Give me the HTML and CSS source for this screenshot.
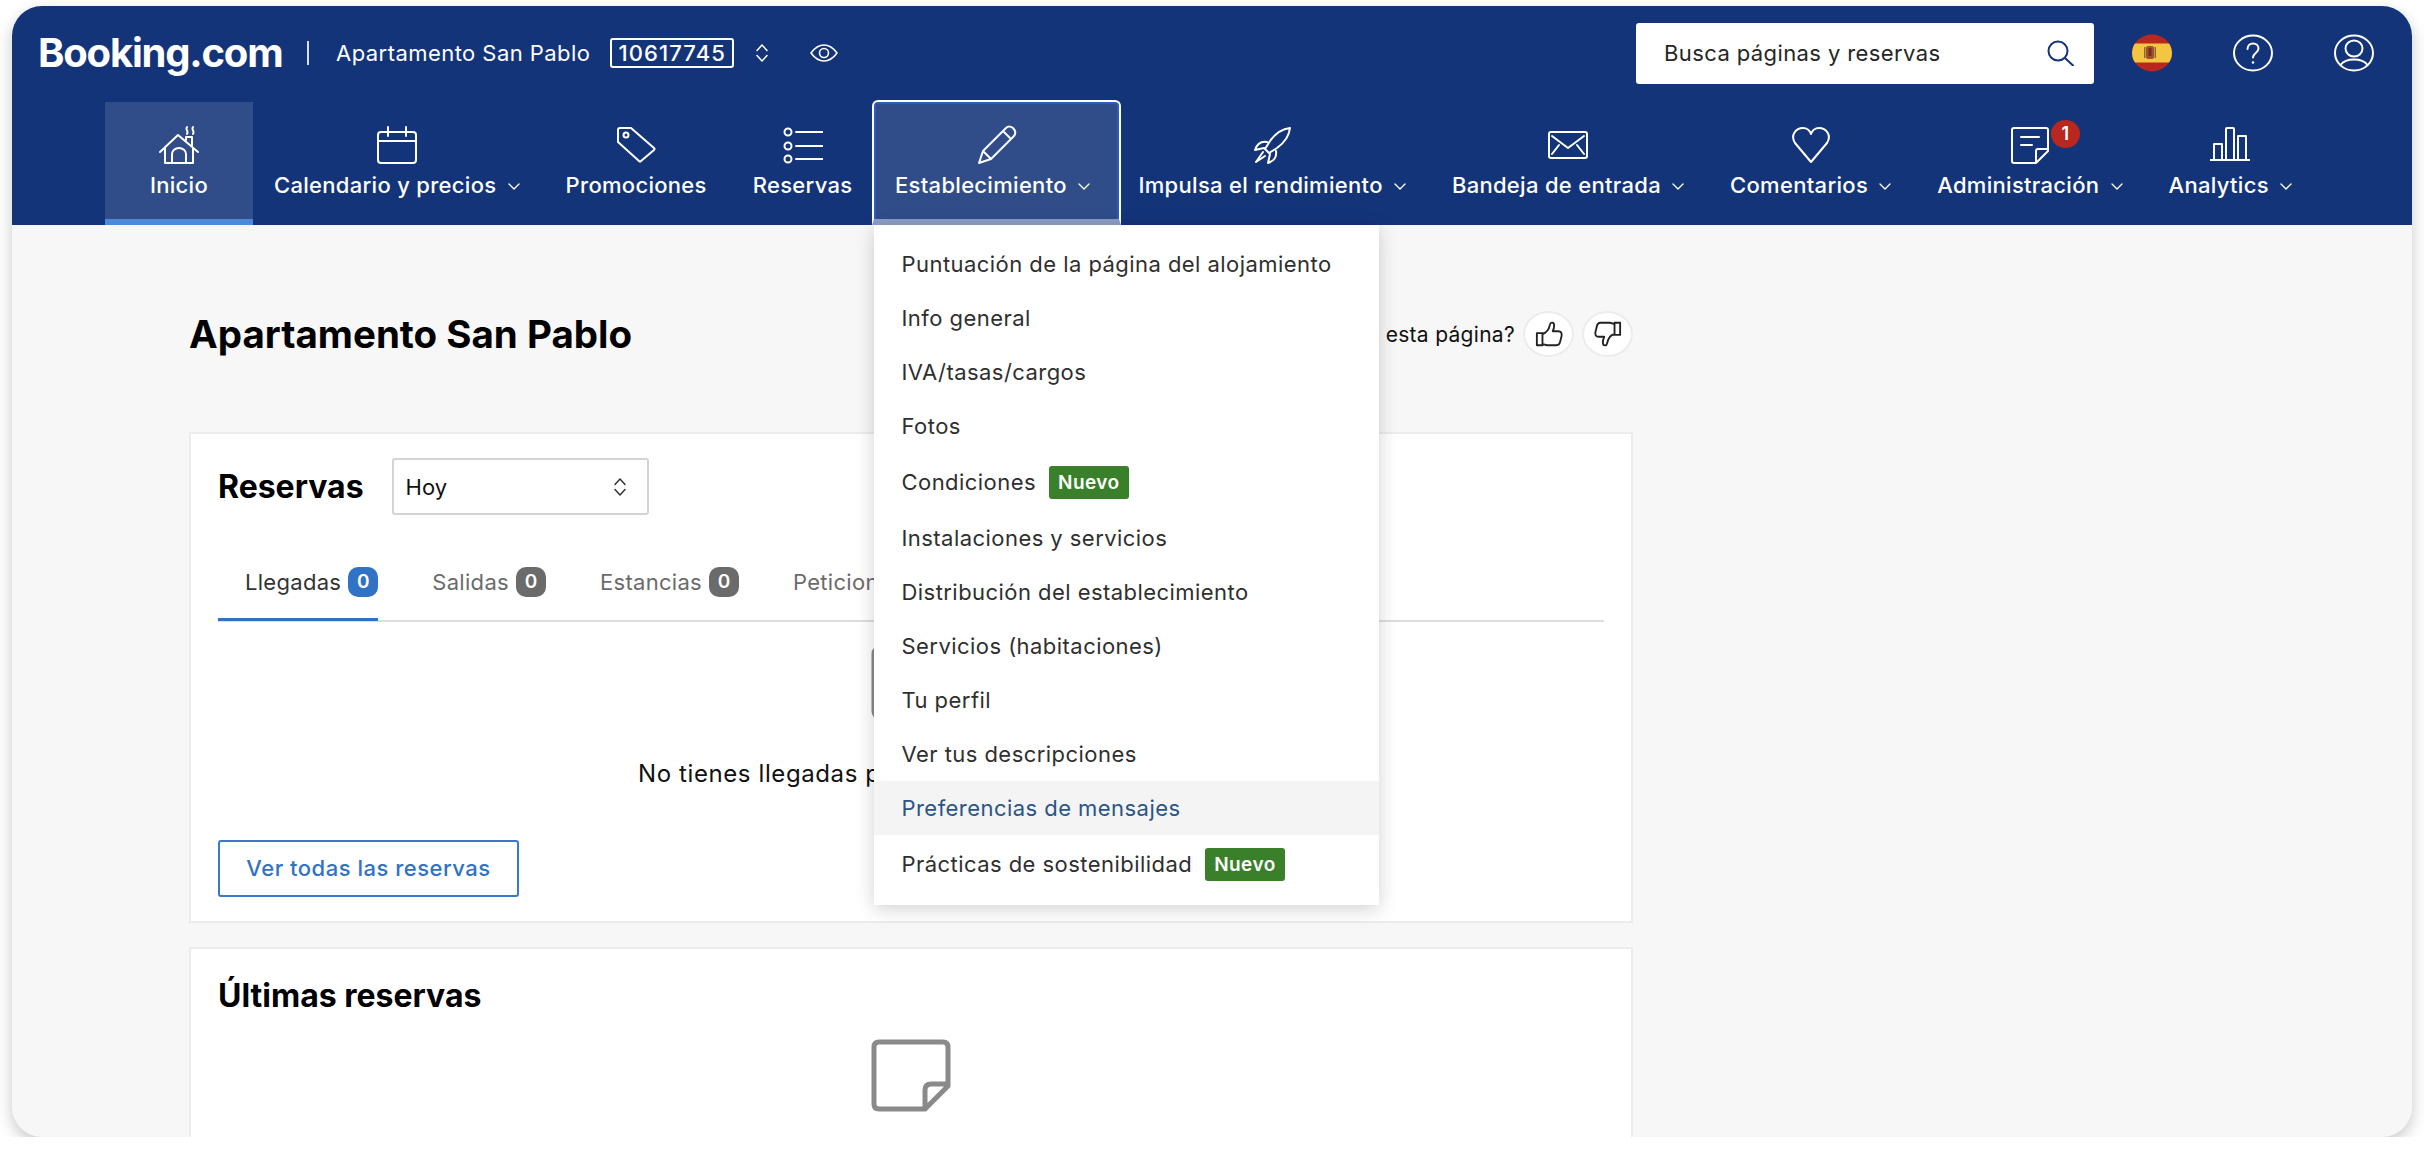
FILE: index.html
```html
<!DOCTYPE html>
<html lang="es">
<head>
    <meta charset="UTF-8">
    <title>Apartamento San Pablo</title>
    <link rel="stylesheet" href="styles.css">
</head>
<body>

<div class="window">
    <header class="header">
        <div class="top-bar">
            <span class="logo">Booking.com</span>
            <span class="divider"></span>
            <span class="hotel-name">Apartamento San Pablo</span>
            <span class="hotel-id">10617745</span>
            <svg class="updown" viewBox="0 0 14 20"><path d="M2 7.5 7 2l5 5.5M2 12.5 7 18l5-5.5"/></svg>
            <svg class="eye" viewBox="0 0 28 20"><path d="M1 10c4-5.500 8-8 13-8s9 2.500 13 8c-4 5.500-8 8-13 8s-9-2.500-13-8z"/><circle cx="14" cy="10" r="4.500"/></svg>

            <div class="search">
                <span>Busca páginas y reservas</span>
                <svg viewBox="0 0 28 26"><circle cx="12" cy="11" r="9.500"/><path d="m19 18 8 7.500"/></svg>
            </div>

            <div class="top-icons">
                <svg class="flag" viewBox="0 0 40 38">
                    <defs><clipPath id="flagClip"><ellipse cx="20" cy="19" rx="20" ry="18.500"/></clipPath></defs>
                    <g clip-path="url(#flagClip)">
                        <rect width="40" height="38" fill="#b8281f"/>
                        <rect y="9.500" width="40" height="19" fill="#f4c542"/>
                        <rect x="14" y="12" width="8" height="13" rx="2" fill="#a0522d"/>
                        <rect x="16.500" y="14" width="3" height="8" fill="#7a2a20"/>
                        <rect x="12" y="13" width="1.500" height="11" fill="#8b6b3a"/>
                        <rect x="22.500" y="13" width="1.500" height="11" fill="#8b6b3a"/>
                    </g>
                </svg>
                <svg class="top-icon" viewBox="0 0 40 38"><ellipse cx="20" cy="19" rx="19" ry="17.500"/><path d="M14.500 15c0-3.500 2.500-5.500 5.500-5.500s5.500 2 5.500 5c0 4.500-5.500 4.500-5.500 9"/><circle class="dot" cx="20" cy="28.500" r="1.300"/></svg>
                <svg class="top-icon" viewBox="0 0 40 38"><ellipse cx="20" cy="19" rx="19" ry="17.500"/><ellipse cx="20" cy="14.500" rx="8.500" ry="8"/><path d="M6.500 31c3-4 8-5.500 13.500-5.500S30.500 27 33.500 31"/></svg>
            </div>
        </div>

        <nav class="nav">
            <a class="nav-item home-item">
                <svg class="nav-icon" viewBox="0 0 40 40"><path d="M1 27 19 10l20 17M6 23v15h28V23M13 38v-9a7 6 0 0 1 14 0v9M27 15v-3h6v9M28 2c-2 3 2 4 0 7M34 2c-2 3 2 4 0 7"/></svg>
                <span class="nav-label">Inicio</span>
            </a>
            <a class="nav-item">
                <svg class="nav-icon" viewBox="0 0 40 40"><rect x="1" y="7" width="38" height="31" rx="3"/><path d="M1 16h38M11 2v9M29 2v9"/></svg>
                <span class="nav-label">Calendario y precios <svg class="chevron" viewBox="0 0 12 7"><path d="m1 1 5 5 5-5"/></svg></span>
            </a>
            <a class="nav-item">
                <svg class="nav-icon" viewBox="0 0 40 40"><path d="M2 5q0-2 2-2h11l23 20q1 1 0 2L25 36q-1 1-2 0L2 17z"/><circle cx="10" cy="10" r="2.500"/></svg>
                <span class="nav-label">Promociones</span>
            </a>
            <a class="nav-item">
                <svg class="nav-icon" viewBox="0 0 40 40"><circle cx="5" cy="7" r="3.500"/><circle cx="5" cy="21" r="3.500"/><circle cx="5" cy="34" r="3.500"/><path d="M13 7h27M13 21h27M13 34h27"/></svg>
                <span class="nav-label">Reservas</span>
            </a>
            <div class="nav-item open-item">
                <svg class="nav-icon" viewBox="0 0 40 40"><path d="M2 38l4-12L29 3q3-3 7 0 4 4 1 8L14 34zM6 26l8 8M26 6l8 8"/></svg>
                <span class="nav-label">Establecimiento <svg class="chevron" viewBox="0 0 12 7"><path d="m1 1 5 5 5-5"/></svg></span>

                <ul class="dropdown">
                    <li>Puntuación de la página del alojamiento</li>
                    <li>Info general</li>
                    <li>IVA/tasas/cargos</li>
                    <li>Fotos</li>
                    <li class="with-tag">Condiciones <span class="tag">Nuevo</span></li>
                    <li>Instalaciones y servicios</li>
                    <li>Distribución del establecimiento</li>
                    <li>Servicios (habitaciones)</li>
                    <li>Tu perfil</li>
                    <li>Ver tus descripciones</li>
                    <li class="hovered">Preferencias de mensajes</li>
                    <li class="with-tag">Prácticas de sostenibilidad <span class="tag">Nuevo</span></li>
                </ul>
            </div>
            <a class="nav-item">
                <svg class="nav-icon" viewBox="0 0 40 40"><path d="M38 3c-9 1-15 6-20 13l-5 8 4 4 8-5c7-5 12-11 13-20zM15 17C9 16 5 19 3 25l9-2M24 26c1 6-2 10-8 12l2-9M11 27l-7 10 9-6"/></svg>
                <span class="nav-label">Impulsa el rendimiento <svg class="chevron" viewBox="0 0 12 7"><path d="m1 1 5 5 5-5"/></svg></span>
            </a>
            <a class="nav-item">
                <svg class="nav-icon" viewBox="0 0 40 40"><rect x="1" y="7" width="38" height="26" rx="2"/><path d="m4 11 16 12 16-12M4 29l7-9M36 29l-7-9"/></svg>
                <span class="nav-label">Bandeja de entrada <svg class="chevron" viewBox="0 0 12 7"><path d="m1 1 5 5 5-5"/></svg></span>
            </a>
            <a class="nav-item">
                <svg class="nav-icon" viewBox="0 0 40 40"><path d="M20 37 4 18C-1 10 5 3 12 3c4 0 7 3 8 6 1-3 4-6 8-6 7 0 13 7 8 15z"/></svg>
                <span class="nav-label">Comentarios <svg class="chevron" viewBox="0 0 12 7"><path d="m1 1 5 5 5-5"/></svg></span>
            </a>
            <a class="nav-item">
                <span class="icon-wrap">
                    <svg class="nav-icon" viewBox="0 0 40 40"><path d="M4 3h32q2 0 2 2v21L26 38H4q-2 0-2-2V5q0-2 2-2zM38 24H28q-2 0-2 2v12M11 12h18M11 20h11"/></svg>
                    <span class="count">1</span>
                </span>
                <span class="nav-label">Administración <svg class="chevron" viewBox="0 0 12 7"><path d="m1 1 5 5 5-5"/></svg></span>
            </a>
            <a class="nav-item">
                <svg class="nav-icon" viewBox="0 0 40 40"><path d="M0 35h40M4 35V19h8v16M16 35V4q0-1 1-1h6q1 0 1 1v31M28 35V11h8v24"/></svg>
                <span class="nav-label">Analytics <svg class="chevron" viewBox="0 0 12 7"><path d="m1 1 5 5 5-5"/></svg></span>
            </a>
        </nav>
    </header>

    <main class="main">
        <div class="title-row">
            <h1>Apartamento San Pablo</h1>
            <div class="feedback">
                <span>¿Te ha resultado útil esta página?</span>
                <button class="thumb"><svg viewBox="0 0 30 30"><path d="M2 14h6v13H2zM8 15c4-1 7-5 8-10 .5-3 4.500-3 4.500 1 0 2-.5 4-1.500 6h6c3 0 4 2 3.500 5l-1.500 6c-.5 3-2 4-4 4H13c-2 0-3-1-5-1"/></svg></button>
                <button class="thumb"><svg viewBox="0 0 30 30"><path d="M28 16h-6V3h6zM22 15c-4 1-7 5-8 10-.5 3-4.500 3-4.500-1 0-2 .5-4 1.500-6H5c-3 0-4-2-3.500-5L3 7c.5-3 2-4 4-4h10c2 0 3 1 5 1"/></svg></button>
            </div>
        </div>

        <section class="card">
            <div class="card-head">
                <h2>Reservas</h2>
                <div class="select">
                    <span>Hoy</span>
                    <svg viewBox="0 0 14 20"><path d="M2 7.500 7 2l5 5.500M2 12.500 7 18l5-5.500"/></svg>
                </div>
            </div>

            <div class="tabs">
                <div class="tab current">Llegadas <span class="pill">0</span></div>
                <div class="tab">Salidas <span class="pill">0</span></div>
                <div class="tab">Estancias <span class="pill">0</span></div>
                <div class="tab">Peticiones <span class="pill">0</span></div>
            </div>

            <div class="empty">
                <svg class="empty-icon" viewBox="0 0 80 73"><path d="M8 3h64q5 0 5 5v39L54 70H8q-5 0-5-5V8q0-5 5-5zM77 45H60q-6 0-6 6v19"/></svg>
                <p>No tienes llegadas programadas para este día</p>
            </div>

            <a class="outline-btn">Ver todas las reservas</a>
        </section>

        <section class="card last-card">
            <h2>Últimas reservas</h2>
            <div class="empty">
                <svg class="empty-icon" viewBox="0 0 80 73"><path d="M8 3h64q5 0 5 5v39L54 70H8q-5 0-5-5V8q0-5 5-5zM77 45H60q-6 0-6 6v19"/></svg>
            </div>
        </section>
    </main>
</div>

</body>
</html>
```
FILE: styles.css
```css
* {
    box-sizing: border-box;
}

body {
    margin: 0;
    background: #ffffff;
    font-family: Inter, "Liberation Sans", sans-serif;
    color: #111;
    overflow: hidden;
}

.window {
    margin: 6px 12px 0;
    height: 1131px;
    background: #f7f7f7;
    border-radius: 30px;
    box-shadow: 0 6px 16px rgba(0, 0, 0, 0.22);
    overflow: hidden;
}

.header {
    background: #14347a;
    color: #fff;
}

svg {
    fill: none;
    stroke: #fff;
    stroke-width: 2;
    stroke-linecap: round;
    stroke-linejoin: round;
}

/* top row */
.top-bar {
    display: flex;
    align-items: center;
    height: 94px;
    padding: 0 38px 0 26px;
}

.logo {
    width: 245px;
    margin-top: -2px;
    font-size: 40px;
    font-weight: 700;
    letter-spacing: -1.2px;
    white-space: nowrap;
}

.divider {
    width: 2px;
    height: 24px;
    margin: 0 27px 0 24px;
    background: #d8deeb;
}

.hotel-name {
    font-size: 22px;
    letter-spacing: 0.45px;
    white-space: nowrap;
}

.hotel-id {
    margin-left: 20px;
    padding: 0 6px;
    height: 30px;
    line-height: 26px;
    border: 2px solid #fff;
    border-radius: 3px;
    font-size: 22px;
    letter-spacing: 1.100px;
    font-weight: 500;
}

.updown {
    width: 14px;
    height: 20px;
    margin-left: 21px;
    stroke-width: 1.5;
}

.eye {
    width: 28px;
    height: 20px;
    margin-left: 41px;
    stroke-width: 1.6;
}

.search {
    display: flex;
    align-items: center;
    justify-content: space-between;
    width: 458px;
    height: 61px;
    margin-left: auto;
    padding: 0 20px 0 28px;
    background: #fff;
    border-radius: 3px;
    color: #262626;
    font-size: 22px;
    letter-spacing: 0.4px;
}

.search svg {
    width: 28px;
    height: 26px;
    stroke: #14347a;
}

.top-icons {
    display: flex;
    align-items: center;
    gap: 61px;
    margin-left: 38px;
}

.flag {
    width: 40px;
    height: 38px;
    stroke: none;
}

.top-icon {
    width: 40px;
    height: 38px;
}

.top-icon .dot {
    fill: #fff;
    stroke: none;
}

/* main nav */
.nav {
    display: flex;
    align-items: stretch;
    height: 125px;
    padding-left: 93px;
}

.nav-item {
    position: relative;
    display: flex;
    flex-direction: column;
    align-items: center;
    padding: 25px 23px 0;
    white-space: nowrap;
}

.nav-icon {
    display: block;
    width: 40px;
    height: 40px;
}

.nav-label {
    margin-top: 5px;
    line-height: 30px;
    font-size: 22px;
    font-weight: 500;
    letter-spacing: 0.3px;
}

.chevron {
    width: 12px;
    height: 7px;
    margin-left: 5px;
    vertical-align: 3px;
    stroke-width: 1.4;
}

.home-item {
    width: 148px;
    margin-top: 2px;
    margin-right: -2px;
    padding-top: 23px;
    background: #304d8a;
    border-bottom: 6px solid #4a8ad8;
}

.open-item {
    width: 249px;
    margin-left: -3px;
    margin-right: -6px;
    background: #304d8a;
    border: 2px solid #fff;
    border-bottom: 6px solid #8b9dc5;
    border-radius: 6px 6px 0 0;
    box-shadow: inset 0 2px 0 #2b5cc0, inset 2px 0 0 #2b5cc0, inset -2px 0 0 #2b5cc0;
    padding-top: 23px;
}

.open-item .nav-label {
    margin-right: 9px;
}

.icon-wrap {
    position: relative;
    display: block;
}

.count {
    position: absolute;
    top: -5px;
    right: -30px;
    width: 29px;
    height: 28px;
    border-radius: 50%;
    background: #b8281f;
    color: #fff;
    font-size: 18px;
    font-weight: 600;
    line-height: 28px;
    text-align: center;
}

/* dropdown */
.dropdown {
    position: absolute;
    top: calc(100% + 6px);
    left: 0;
    z-index: 10;
    width: 505px;
    margin: 0;
    padding: 12px 0;
    list-style: none;
    background: #fff;
    box-shadow: 0 4px 18px rgba(0, 0, 0, 0.18);
    color: #2f2f2f;
    font-size: 22px;
    font-weight: 400;
    letter-spacing: 0.45px;
}

.dropdown li {
    display: flex;
    align-items: center;
    height: 54px;
    padding-left: 27px;
}

.dropdown .with-tag {
    height: 58px;
}

.dropdown .hovered {
    background: #f4f4f4;
    color: #2b5587;
}

.tag {
    margin-left: 13px;
    padding: 0 9px;
    height: 33px;
    line-height: 33px;
    background: #3a7f2a;
    border-radius: 3px;
    color: #fff;
    font-size: 19px;
    font-weight: 600;
}

/* page content */
.main {
    padding: 86px 0 0 177px;
    width: 1621px;
}

.title-row {
    display: flex;
    align-items: center;
    justify-content: space-between;
    height: 46px;
    margin-bottom: 75px;
}

h1 {
    margin: 0;
    font-size: 38.500px;
    font-weight: 700;
    color: #000;
}

h2 {
    margin: 0;
    font-size: 32px;
    font-weight: 700;
    color: #000;
}

.feedback {
    display: flex;
    align-items: center;
    gap: 8px;
    font-size: 21px;
    letter-spacing: 0.3px;
    color: #111;
}

.thumb {
    display: flex;
    align-items: center;
    justify-content: center;
    width: 51px;
    height: 46px;
    padding: 0;
    background: #fff;
    border: 2px solid #ececec;
    border-radius: 50%;
}

.thumb svg {
    width: 28px;
    height: 28px;
    stroke: #222;
}

.card {
    display: flex;
    flex-direction: column;
    align-items: stretch;
    padding: 24px 27px 24px;
    background: #fff;
    border: 2px solid #ececec;
}

.card-head {
    display: flex;
    align-items: center;
    gap: 28px;
}

.select {
    display: flex;
    align-items: center;
    justify-content: space-between;
    width: 257px;
    height: 57px;
    padding: 0 20px 0 12px;
    border: 2px solid #d4d4d4;
    border-radius: 3px;
    font-size: 22px;
}

.select svg {
    width: 14px;
    height: 20px;
    stroke: #333;
    stroke-width: 1.5;
}

.tabs {
    display: flex;
    gap: 27px;
    margin-top: 52px;
    border-bottom: 2px solid #dddddd;
}

.tab {
    display: flex;
    align-items: center;
    gap: 7px;
    height: 54px;
    margin-bottom: -1px;
    padding: 0 0 21px 27px;
    border-bottom: 3px solid transparent;
    color: #6b6b6b;
    font-size: 22px;
    letter-spacing: 0.3px;
    white-space: nowrap;
}

.tab.current {
    color: #333;
    border-bottom-color: #3072c4;
}

.pill {
    width: 30px;
    height: 30px;
    line-height: 30px;
    border-radius: 10px;
    background: #6b6b6b;
    color: #fff;
    font-size: 19px;
    font-weight: 600;
    text-align: center;
    letter-spacing: 0;
}

.current .pill {
    background: #3072c4;
}

.empty {
    display: flex;
    flex-direction: column;
    align-items: center;
    margin-top: 24px;
}

.empty-icon {
    width: 80px;
    height: 73px;
    stroke: #8a8a8a;
    stroke-width: 5;
}

.empty p {
    margin: 40px 0 0;
    line-height: 30px;
    font-size: 24px;
    font-weight: 400;
    letter-spacing: 0.6px;
    color: #111;
    white-space: nowrap;
}

.outline-btn {
    align-self: flex-start;
    width: 301px;
    height: 57px;
    margin-top: 51px;
    line-height: 53px;
    text-align: center;
    border: 2px solid #3b78c9;
    border-radius: 3px;
    color: #3072c4;
    font-size: 22px;
    font-weight: 500;
    letter-spacing: 0.5px;
}

.last-card {
    margin-top: 24px;
    padding-top: 27px;
    height: 300px;
}

.last-card .empty {
    margin-top: 24px;
}
```
